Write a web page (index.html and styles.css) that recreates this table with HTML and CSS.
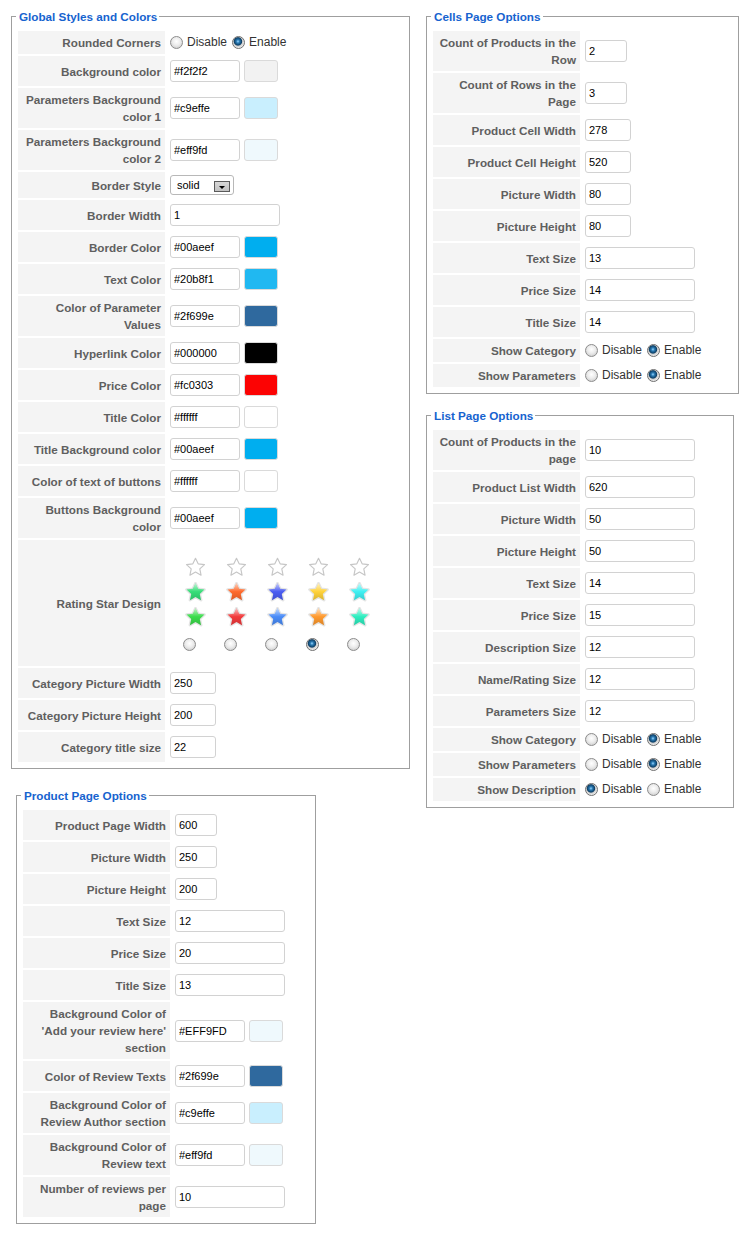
FILE: index.html
```html
<!DOCTYPE html>
<html lang="en">
<head>
<meta charset="utf-8">
<title>Options</title>
<link rel="stylesheet" href="styles.css">
</head>
<body>
<svg class="defs" aria-hidden="true" width="0" height="0">
  <defs>
    <linearGradient id="shine" x1="0" y1="0" x2="0" y2="1">
      <stop offset="0" stop-color="#fff" stop-opacity="0.7"/>
      <stop offset="0.5" stop-color="#fff" stop-opacity="0"/>
      <stop offset="0.5" stop-color="#000" stop-opacity="0"/>
      <stop offset="1" stop-color="#000" stop-opacity="0.15"/>
    </linearGradient>
    <symbol id="star-shape" viewBox="0 0 20 20">
      <path d="M10 1.2 L12.53 6.52 L18.56 7.22 L14.09 11.33 L15.29 17.28 L10 14.3 L4.71 17.28 L5.91 11.33 L1.44 7.22 L7.47 6.52 Z"/>
    </symbol>
  </defs>
</svg>
<div class="page">
  <div class="col col-left">
    <fieldset class="box box-global">
      <legend>Global Styles and Colors</legend>
      <table class="opts">
        <tr><th>Rounded Corners</th><td><div class="radios"><input class="radio" type="radio" name="rc"><span class="rl">Disable</span><input class="radio" type="radio" name="rc" checked><span class="rl">Enable</span></div></td></tr>
        <tr><th>Background color</th><td><div class="field"><input class="inp w70" type="text" value="#f2f2f2"><span class="swatch sw-f2f2f2"></span></div></td></tr>
        <tr><th>Parameters Background color 1</th><td><div class="field"><input class="inp w70" type="text" value="#c9effe"><span class="swatch sw-c9effe"></span></div></td></tr>
        <tr><th>Parameters Background color 2</th><td><div class="field"><input class="inp w70" type="text" value="#eff9fd"><span class="swatch sw-eff9fd"></span></div></td></tr>
        <tr><th>Border Style</th><td><div class="select"><span>solid</span><span class="sel-btn"><span class="tri"></span></span></div></td></tr>
        <tr><th>Border Width</th><td><div class="field"><input class="inp w110" type="text" value="1"></div></td></tr>
        <tr><th>Border Color</th><td><div class="field"><input class="inp w70" type="text" value="#00aeef"><span class="swatch sw-00aeef"></span></div></td></tr>
        <tr><th>Text Color</th><td><div class="field"><input class="inp w70" type="text" value="#20b8f1"><span class="swatch sw-20b8f1"></span></div></td></tr>
        <tr><th>Color of Parameter Values</th><td><div class="field"><input class="inp w70" type="text" value="#2f699e"><span class="swatch sw-2f699e"></span></div></td></tr>
        <tr><th>Hyperlink Color</th><td><div class="field"><input class="inp w70" type="text" value="#000000"><span class="swatch sw-000000"></span></div></td></tr>
        <tr><th>Price Color</th><td><div class="field"><input class="inp w70" type="text" value="#fc0303"><span class="swatch sw-fc0303"></span></div></td></tr>
        <tr><th>Title Color</th><td><div class="field"><input class="inp w70" type="text" value="#ffffff"><span class="swatch sw-ffffff"></span></div></td></tr>
        <tr><th>Title Background color</th><td><div class="field"><input class="inp w70" type="text" value="#00aeef"><span class="swatch sw-00aeef"></span></div></td></tr>
        <tr><th>Color of text of buttons</th><td><div class="field"><input class="inp w70" type="text" value="#ffffff"><span class="swatch sw-ffffff"></span></div></td></tr>
        <tr><th>Buttons Background color</th><td><div class="field"><input class="inp w70" type="text" value="#00aeef"><span class="swatch sw-00aeef"></span></div></td></tr>
        <tr><th>Rating Star Design</th><td>
          <div class="stars">
            <svg class="star outline" viewBox="0 0 20 20"><use href="#star-shape"/></svg>
            <svg class="star outline" viewBox="0 0 20 20"><use href="#star-shape"/></svg>
            <svg class="star outline" viewBox="0 0 20 20"><use href="#star-shape"/></svg>
            <svg class="star outline" viewBox="0 0 20 20"><use href="#star-shape"/></svg>
            <svg class="star outline" viewBox="0 0 20 20"><use href="#star-shape"/></svg>

            <svg class="star st-green" viewBox="0 0 20 20"><use class="s-base" href="#star-shape"/><use class="s-shine" href="#star-shape"/></svg>
            <svg class="star st-orange" viewBox="0 0 20 20"><use class="s-base" href="#star-shape"/><use class="s-shine" href="#star-shape"/></svg>
            <svg class="star st-blue" viewBox="0 0 20 20"><use class="s-base" href="#star-shape"/><use class="s-shine" href="#star-shape"/></svg>
            <svg class="star st-yellow" viewBox="0 0 20 20"><use class="s-base" href="#star-shape"/><use class="s-shine" href="#star-shape"/></svg>
            <svg class="star st-cyan" viewBox="0 0 20 20"><use class="s-base" href="#star-shape"/><use class="s-shine" href="#star-shape"/></svg>

            <svg class="star st-green2" viewBox="0 0 20 20"><use class="s-base" href="#star-shape"/><use class="s-shine" href="#star-shape"/></svg>
            <svg class="star st-red" viewBox="0 0 20 20"><use class="s-base" href="#star-shape"/><use class="s-shine" href="#star-shape"/></svg>
            <svg class="star st-sky" viewBox="0 0 20 20"><use class="s-base" href="#star-shape"/><use class="s-shine" href="#star-shape"/></svg>
            <svg class="star st-amber" viewBox="0 0 20 20"><use class="s-base" href="#star-shape"/><use class="s-shine" href="#star-shape"/></svg>
            <svg class="star st-teal" viewBox="0 0 20 20"><use class="s-base" href="#star-shape"/><use class="s-shine" href="#star-shape"/></svg>

            <input class="radio" type="radio" name="star">
            <input class="radio" type="radio" name="star">
            <input class="radio" type="radio" name="star">
            <input class="radio" type="radio" name="star" checked>
            <input class="radio" type="radio" name="star">
          </div>
        </td></tr>
        <tr><th>Category Picture Width</th><td><div class="field"><input class="inp w46" type="text" value="250"></div></td></tr>
        <tr><th>Category Picture Height</th><td><div class="field"><input class="inp w46" type="text" value="200"></div></td></tr>
        <tr><th>Category title size</th><td><div class="field"><input class="inp w46" type="text" value="22"></div></td></tr>
      </table>
    </fieldset>

    <fieldset class="box box-product">
      <legend>Product Page Options</legend>
      <table class="opts">
        <tr><th>Product Page Width</th><td><div class="field"><input class="inp w42" type="text" value="600"></div></td></tr>
        <tr><th>Picture Width</th><td><div class="field"><input class="inp w42" type="text" value="250"></div></td></tr>
        <tr><th>Picture Height</th><td><div class="field"><input class="inp w42" type="text" value="200"></div></td></tr>
        <tr><th>Text Size</th><td><div class="field"><input class="inp w110" type="text" value="12"></div></td></tr>
        <tr><th>Price Size</th><td><div class="field"><input class="inp w110" type="text" value="20"></div></td></tr>
        <tr><th>Title Size</th><td><div class="field"><input class="inp w110" type="text" value="13"></div></td></tr>
        <tr><th>Background Color of 'Add your review here' section</th><td><div class="field"><input class="inp w70" type="text" value="#EFF9FD"><span class="swatch sw-eff9fd"></span></div></td></tr>
        <tr><th>Color of Review Texts</th><td><div class="field"><input class="inp w70" type="text" value="#2f699e"><span class="swatch sw-2f699e"></span></div></td></tr>
        <tr><th>Background Color of Review Author section</th><td><div class="field"><input class="inp w70" type="text" value="#c9effe"><span class="swatch sw-c9effe"></span></div></td></tr>
        <tr><th>Background Color of Review text</th><td><div class="field"><input class="inp w70" type="text" value="#eff9fd"><span class="swatch sw-eff9fd"></span></div></td></tr>
        <tr><th>Number of reviews per page</th><td><div class="field"><input class="inp w110" type="text" value="10"></div></td></tr>
      </table>
    </fieldset>
  </div>

  <div class="col col-right">
    <fieldset class="box box-cells">
      <legend>Cells Page Options</legend>
      <table class="opts">
        <tr><th>Count of Products in the Row</th><td><div class="field"><input class="inp w42" type="text" value="2"></div></td></tr>
        <tr><th>Count of Rows in the Page</th><td><div class="field"><input class="inp w42" type="text" value="3"></div></td></tr>
        <tr><th>Product Cell Width</th><td><div class="field"><input class="inp w46" type="text" value="278"></div></td></tr>
        <tr><th>Product Cell Height</th><td><div class="field"><input class="inp w46" type="text" value="520"></div></td></tr>
        <tr><th>Picture Width</th><td><div class="field"><input class="inp w46" type="text" value="80"></div></td></tr>
        <tr><th>Picture Height</th><td><div class="field"><input class="inp w46" type="text" value="80"></div></td></tr>
        <tr><th>Text Size</th><td><div class="field"><input class="inp w110" type="text" value="13"></div></td></tr>
        <tr><th>Price Size</th><td><div class="field"><input class="inp w110" type="text" value="14"></div></td></tr>
        <tr><th>Title Size</th><td><div class="field"><input class="inp w110" type="text" value="14"></div></td></tr>
        <tr><th>Show Category</th><td><div class="radios"><input class="radio" type="radio" name="c1"><span class="rl">Disable</span><input class="radio" type="radio" name="c1" checked><span class="rl">Enable</span></div></td></tr>
        <tr><th>Show Parameters</th><td><div class="radios"><input class="radio" type="radio" name="c2"><span class="rl">Disable</span><input class="radio" type="radio" name="c2" checked><span class="rl">Enable</span></div></td></tr>
      </table>
    </fieldset>

    <fieldset class="box box-list">
      <legend>List Page Options</legend>
      <table class="opts">
        <tr><th>Count of Products in the page</th><td><div class="field"><input class="inp w110" type="text" value="10"></div></td></tr>
        <tr><th>Product List Width</th><td><div class="field"><input class="inp w110" type="text" value="620"></div></td></tr>
        <tr><th>Picture Width</th><td><div class="field"><input class="inp w110" type="text" value="50"></div></td></tr>
        <tr><th>Picture Height</th><td><div class="field"><input class="inp w110" type="text" value="50"></div></td></tr>
        <tr><th>Text Size</th><td><div class="field"><input class="inp w110" type="text" value="14"></div></td></tr>
        <tr><th>Price Size</th><td><div class="field"><input class="inp w110" type="text" value="15"></div></td></tr>
        <tr><th>Description Size</th><td><div class="field"><input class="inp w110" type="text" value="12"></div></td></tr>
        <tr><th>Name/Rating Size</th><td><div class="field"><input class="inp w110" type="text" value="12"></div></td></tr>
        <tr><th>Parameters Size</th><td><div class="field"><input class="inp w110" type="text" value="12"></div></td></tr>
        <tr><th>Show Category</th><td><div class="radios"><input class="radio" type="radio" name="l1"><span class="rl">Disable</span><input class="radio" type="radio" name="l1" checked><span class="rl">Enable</span></div></td></tr>
        <tr><th>Show Parameters</th><td><div class="radios"><input class="radio" type="radio" name="l2"><span class="rl">Disable</span><input class="radio" type="radio" name="l2" checked><span class="rl">Enable</span></div></td></tr>
        <tr><th>Show Description</th><td><div class="radios"><input class="radio" type="radio" name="l3" checked><span class="rl">Disable</span><input class="radio" type="radio" name="l3"><span class="rl">Enable</span></div></td></tr>
      </table>
    </fieldset>
  </div>
</div>
</body>
</html>
```

FILE: styles.css
```css
html, body {
  margin: 0;
  background: #fff;
}
body {
  font-family: "Liberation Sans", Arial, sans-serif;
}

.defs {
  position: absolute;
  width: 0;
  height: 0;
  overflow: hidden;
}

.page {
  display: flex;
  align-items: flex-start;
  padding-top: 8px;
}

.col {
  display: flex;
  flex-direction: column;
  align-items: flex-start;
}

.col-left {
  width: 426px;
  flex: none;
}

.box {
  margin: 0;
  padding: 4px;
  border: 1px solid #9f9f9f;
  box-sizing: border-box;
  min-width: 0;
}

.box legend {
  padding: 0 2px 0 3px;
  font-weight: bold;
  font-size: 11.7px;
  line-height: 17px;
  color: #1663cf;
}

.box-global {
  width: 399px;
  margin-left: 11px;
}

.box-product {
  width: 300px;
  margin-left: 16px;
  margin-top: 18px;
}

.box-cells {
  width: 313px;
}

.box-list {
  width: 308px;
  margin-top: 13px;
}

.opts {
  border-collapse: separate;
  border-spacing: 2px;
}

.opts th {
  width: 141px;
  padding: 3px 4px 3px 2px;
  background: #f4f4f4;
  text-align: right;
  vertical-align: middle;
  font-size: 11.7px;
  line-height: 17px;
  font-weight: bold;
  color: #5f5f5f;
}

.opts td {
  padding: 3px;
  vertical-align: middle;
  font-size: 12px;
  line-height: 17px;
  color: #333;
}

.field {
  display: flex;
  align-items: center;
  gap: 4px;
}

.inp {
  box-sizing: border-box;
  height: 22px;
  margin: 1px 0;
  border: 1px solid #d2d2d2;
  border-radius: 3px;
  padding: 0 3px;
  font: 11px "Liberation Sans", Arial, sans-serif;
  color: #000;
  background: #fff;
  outline: none;
}

.w42 { width: 42px; }
.w46 { width: 46px; }
.w70 { width: 70px; }
.w110 { width: 110px; }

.swatch {
  display: block;
  width: 34px;
  height: 22px;
  box-sizing: border-box;
  border: 1px solid #dadada;
  border-radius: 3px;
  margin: 1px 0;
}

.sw-f2f2f2 { background: #f2f2f2; }
.sw-c9effe { background: #c9effe; }
.sw-eff9fd { background: #eff9fd; }
.sw-00aeef { background: #00aeef; }
.sw-20b8f1 { background: #20b8f1; }
.sw-2f699e { background: #2f699e; }
.sw-000000 { background: #000000; }
.sw-fc0303 { background: #fc0303; }
.sw-ffffff { background: #ffffff; }

.select {
  display: flex;
  align-items: center;
  justify-content: space-between;
  box-sizing: border-box;
  width: 64px;
  height: 20px;
  border: 1px solid #b8b8b8;
  border-radius: 3px;
  padding: 0 3px 0 6px;
  font-size: 11px;
  color: #000;
  background: #fff;
}

.select > span:first-child {
  padding-top: 1px;
}

.sel-btn {
  display: flex;
  align-items: flex-end;
  justify-content: center;
  align-self: flex-end;
  box-sizing: border-box;
  width: 16px;
  height: 11px;
  margin-bottom: 2px;
  padding-bottom: 2px;
  border: 1px solid #5a5a5a;
  background: linear-gradient(#d8d8d8, #c2c2c2);
}

.tri {
  width: 0;
  height: 0;
  border-left: 3.5px solid transparent;
  border-right: 3.5px solid transparent;
  border-top: 3px solid #000;
}

.radios {
  display: flex;
  align-items: center;
}

.radio {
  appearance: none;
  -webkit-appearance: none;
  box-sizing: border-box;
  width: 13px;
  height: 13px;
  margin: 0 4px 0 0;
  border-radius: 50%;
  border: 1px solid #8c8c8c;
  background: radial-gradient(circle at 50% 40%, #ffffff 0%, #ececec 45%, #c2c2c2 100%);
  flex: none;
}

.radio:checked {
  border-color: #6f6f6f;
  background: radial-gradient(circle at 45% 40%, #9ad8ff 0%, #2a7bb5 18%, #0d3f66 42%, #cfcfcf 52%, #f0f0f0 75%, #c8c8c8 100%);
}

.rl {
  margin-right: 5px;
  color: #333;
}

.stars {
  display: grid;
  grid-template-columns: repeat(5, 41px);
  grid-template-rows: 25px 25px 25px 28px;
  place-items: center;
  padding: 12px 0 5px 5px;
}

.stars .radio {
  margin: 0 12px 0 0;
}

.star {
  width: 21px;
  height: 21px;
  overflow: visible;
}

.star.outline use {
  fill: #fff;
  stroke: #c6c6c6;
  stroke-width: 1.1;
  stroke-linejoin: round;
}

.star .s-base {
  fill: currentColor;
  stroke: #e4e4e4;
  stroke-width: 2.6;
  stroke-linejoin: round;
  paint-order: stroke fill;
}

.star .s-shine {
  fill: url(#shine);
  stroke: none;
}

.st-green { color: #35de78; }
.st-orange { color: #ff6a2c; }
.st-blue { color: #4a5cf2; }
.st-yellow { color: #ffd23a; }
.st-cyan { color: #3ff0f2; }
.st-green2 { color: #3cdc4c; }
.st-red { color: #f23a3c; }
.st-sky { color: #4a8cf8; }
.st-amber { color: #ff9a2e; }
.st-teal { color: #2eeec0; }
```
